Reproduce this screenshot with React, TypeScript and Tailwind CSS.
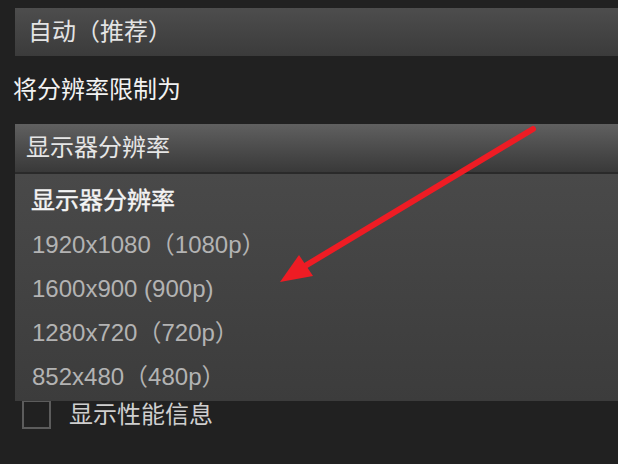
import React from "react";

const font = { fontFamily: '"Liberation Sans", "Noto Sans CJK SC", sans-serif' };

const options = [
  "1920x1080（1080p）",
  "1600x900 (900p)",
  "1280x720（720p）",
  "852x480（480p）",
];

export default function App() {
  return (
    <div
      className="relative w-[618px] h-[464px] overflow-hidden bg-[#212121] text-[24px] leading-none"
      style={font}
    >
      <div className="pt-2 pl-[15px]">
        {/* Top select */}
        <div className="h-12 flex items-center pl-[13px] bg-gradient-to-b from-[#4d4d4d] to-[#3b3b3b] text-[#e4e4e4]">
          自动（推荐）
        </div>

        {/* Label */}
        <div className="h-[68px] flex items-center -ml-[2px] text-[#f2f2f2]">将分辨率限制为</div>

        {/* Resolution select */}
        <div className="h-12 flex items-center pl-[11px] bg-gradient-to-b from-[#606060] to-[#393939] text-[#e6e6e6]">
          显示器分辨率
        </div>

        {/* Checkbox row, partly hidden by the open menu */}
        <div className="mt-[228px] flex items-center gap-[18px] pl-[7px]">
          <div className="w-[29px] h-[29px] border-2 border-[#5c5c5c]" />
          <span className="text-[#cfcfcf]">显示性能信息</span>
        </div>
      </div>

      {/* Open dropdown menu */}
      <div className="absolute left-[15px] right-0 top-[172px] h-[229px] border-t-2 border-[#2a2a2a] bg-gradient-to-b from-[#494949] to-[#3c3c3c] pt-[5px] pl-[16px]">
        <div className="h-[44px] flex items-center text-[#f4f4f4] [-webkit-text-stroke:0.4px_#f4f4f4]">显示器分辨率</div>
        {options.map((o) => (
          <div key={o} className="h-[44px] flex items-center pl-px text-[#b3b3b3]">
            {o}
          </div>
        ))}
      </div>

      {/* Red annotation arrow */}
      <svg className="absolute inset-0 pointer-events-none" width="618" height="464">
        <line x1="533" y1="129" x2="300" y2="269" stroke="#ee1c24" strokeWidth="6" strokeLinecap="round" />
        <polygon points="280,282 299,255 313,276" fill="#ee1c24" />
      </svg>
    </div>
  );
}
